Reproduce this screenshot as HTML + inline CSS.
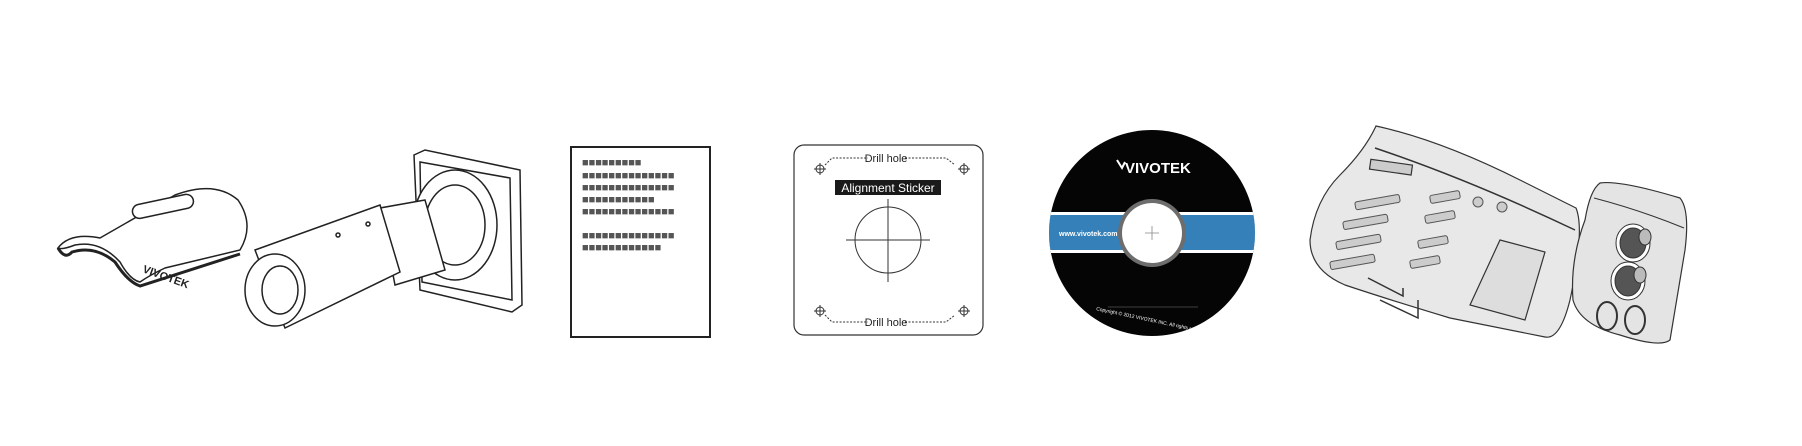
<!DOCTYPE html>
<html><head><meta charset="utf-8"><style>html,body{margin:0;padding:0;background:#fff;width:1802px;height:446px;overflow:hidden}</style></head>
<body>
<svg width="1802" height="446" viewBox="0 0 1802 446" xmlns="http://www.w3.org/2000/svg" font-family="Liberation Sans, sans-serif">
<!-- cover -->
<g fill="#fff" stroke="#222" stroke-width="1.5">
<path d="M58 248 Q70 232 100 238 L175 195 Q215 180 238 200 Q255 225 240 250 L165 268 Q150 275 140 282 Q130 280 120 262 Q100 240 75 245 Q62 250 58 248 Z"/>
<path d="M58 248 Q65 260 72 252 Q95 245 115 262 Q128 282 140 286 L240 254" fill="none" stroke-width="3"/>
<rect x="132" y="200" width="62" height="14" rx="7" transform="rotate(-12 160 207)"/>
</g>
<text x="142" y="272" font-size="11" font-weight="bold" fill="#222" transform="rotate(20 142 272)">VIVOTEK</text>
<!-- camera -->
<g fill="#fff" stroke="#222" stroke-width="1.5">
<path d="M414 155 L425 150 L520 170 L522 305 L512 312 L420 290 Z"/>
<path d="M420 162 L510 178 L512 300 L422 282 Z" fill="none"/>
<ellipse cx="455" cy="225" rx="42" ry="55"/>
<ellipse cx="455" cy="225" rx="30" ry="40"/>
<path d="M380 208 L425 200 L445 270 L395 285 Z"/>
<path d="M255 250 L380 205 L400 272 L285 328 Z"/>
<ellipse cx="275" cy="290" rx="30" ry="36"/>
<ellipse cx="280" cy="290" rx="18" ry="24"/>
<circle cx="338" cy="235" r="2"/><circle cx="368" cy="224" r="2"/>
</g>
<!-- sheet -->
<rect x="571" y="147" width="139" height="190" fill="#fff" stroke="#222" stroke-width="2"/>
<g fill="#555" font-size="11" font-family="Liberation Mono, monospace" font-weight="bold">
<text x="582" y="166" letter-spacing="0">■■■■■■■■■</text>
<text x="582" y="179" letter-spacing="0">■■■■■■■■■■■■■■</text>
<text x="582" y="191" letter-spacing="0">■■■■■■■■■■■■■■</text>
<text x="582" y="203" letter-spacing="0">■■■■■■■■■■■</text>
<text x="582" y="215" letter-spacing="0">■■■■■■■■■■■■■■</text>
<text x="582" y="239" letter-spacing="0">■■■■■■■■■■■■■■</text>
<text x="582" y="251" letter-spacing="0">■■■■■■■■■■■■</text>
</g>
<!-- sticker -->
<rect x="794" y="145" width="189" height="190" rx="10" fill="#fff" stroke="#333" stroke-width="1.2"/>
<g stroke="#333" fill="none" stroke-width="1">
<circle cx="820" cy="169" r="4"/><path d="M814 169h12M820 163v12"/>
<circle cx="964" cy="169" r="4"/><path d="M958 169h12M964 163v12"/>
<circle cx="820" cy="311" r="4"/><path d="M814 311h12M820 305v12"/>
<circle cx="964" cy="311" r="4"/><path d="M958 311h12M964 305v12"/>
<path d="M825 165 L832 158 H868 M905 158 H946 L955 165 M825 315 L832 322 H868 M905 322 H946 L955 315" stroke-dasharray="2 1.5"/>
<circle cx="888" cy="240" r="33"/><path d="M846 240h84M888 199v83"/>
</g>
<text x="886" y="162" font-size="11" text-anchor="middle" fill="#222">Drill hole</text>
<text x="886" y="326" font-size="11" text-anchor="middle" fill="#222">Drill hole</text>
<rect x="835" y="180" width="106" height="15" fill="#1a1a1a"/>
<text x="888" y="192" font-size="12" text-anchor="middle" fill="#fff">Alignment Sticker</text>
<!-- CD -->
<circle cx="1152" cy="233" r="103" fill="#050505"/>
<clipPath id="cd"><circle cx="1152" cy="233" r="103"/></clipPath>
<g clip-path="url(#cd)">
<rect x="1040" y="212" width="230" height="41" fill="#fff"/>
<rect x="1040" y="215" width="230" height="35" fill="#3580b8"/>
</g>
<circle cx="1152" cy="233" r="34" fill="#6d6d6d"/>
<circle cx="1152" cy="233" r="30" fill="#fff"/>
<path d="M1145 233h14M1152 226v14" stroke="#888" stroke-width="0.8"/>
<text x="1059" y="236" font-size="7" font-weight="bold" fill="#fff">www.vivotek.com</text>
<text x="1125" y="173" font-size="15" font-weight="bold" fill="#fff">VIVOTEK</text>
<path d="M1117 160 l5 8 l3 -6" stroke="#fff" stroke-width="2" fill="none"/>
<path d="M1108 307 h90" stroke="#555" stroke-width="0.8"/>
<text x="1152" y="322" font-size="5" fill="#fff" text-anchor="middle" transform="rotate(12 1152 322)">Copyright © 2012 VIVOTEK INC. All rights reserved</text>
<!-- accessory plate -->
<g stroke="#333" stroke-width="1.2">
<path d="M1376 126 Q1440 140 1520 180 L1576 208 Q1585 230 1570 300 Q1560 340 1545 337 L1450 318 Q1390 300 1345 285 Q1310 270 1310 240 Q1315 200 1340 175 Q1365 150 1376 126 Z" fill="#e8e8e8"/>
<path d="M1375 148 Q1470 180 1575 230" fill="none" stroke-width="1.5"/>
<rect x="1370" y="162" width="42" height="10" fill="#ccc" transform="rotate(8 1390 167)"/>
<path d="M1500 240 L1545 252 L1525 320 L1470 305 Z" fill="#ddd"/>
<path d="M1368 278 l35 18 v-8 M1380 300 l38 18 v-18" fill="none" stroke-width="1.5"/>
</g>
<g fill="#ccc" stroke="#555" stroke-width="1">
<rect x="1355" y="198" width="45" height="8" rx="2" transform="rotate(-10 1378 202)"/>
<rect x="1343" y="218" width="45" height="8" rx="2" transform="rotate(-10 1365 222)"/>
<rect x="1336" y="238" width="45" height="8" rx="2" transform="rotate(-10 1358 242)"/>
<rect x="1330" y="258" width="45" height="8" rx="2" transform="rotate(-10 1352 262)"/>
<rect x="1430" y="193" width="30" height="8" rx="2" transform="rotate(-10 1445 197)"/>
<rect x="1425" y="213" width="30" height="8" rx="2" transform="rotate(-10 1440 217)"/>
<rect x="1418" y="238" width="30" height="8" rx="2" transform="rotate(-10 1433 242)"/>
<rect x="1410" y="258" width="30" height="8" rx="2" transform="rotate(-10 1425 262)"/>
<circle cx="1478" cy="202" r="5"/><circle cx="1502" cy="207" r="5"/>
</g>
<!-- small plate -->
<path d="M1600 183 Q1620 180 1680 198 Q1690 210 1685 250 L1670 340 Q1660 348 1620 335 Q1580 325 1573 300 Q1570 260 1585 220 Q1590 190 1600 183 Z" fill="#e4e4e4" stroke="#333" stroke-width="1.2"/>
<path d="M1594 198 Q1640 210 1684 228" fill="none" stroke="#333"/>
<g stroke="#333">
<ellipse cx="1633" cy="243" rx="17" ry="19" fill="#fff"/><ellipse cx="1633" cy="243" rx="13" ry="15" fill="#555"/><ellipse cx="1645" cy="237" rx="6" ry="8" fill="#bbb"/>
<ellipse cx="1628" cy="281" rx="17" ry="19" fill="#fff"/><ellipse cx="1628" cy="281" rx="13" ry="15" fill="#555"/><ellipse cx="1640" cy="275" rx="6" ry="8" fill="#bbb"/>
<ellipse cx="1607" cy="316" rx="10" ry="14" fill="#e4e4e4" stroke-width="2"/>
<ellipse cx="1635" cy="320" rx="10" ry="14" fill="#e4e4e4" stroke-width="2"/>
</g>
</svg>
</body></html>
